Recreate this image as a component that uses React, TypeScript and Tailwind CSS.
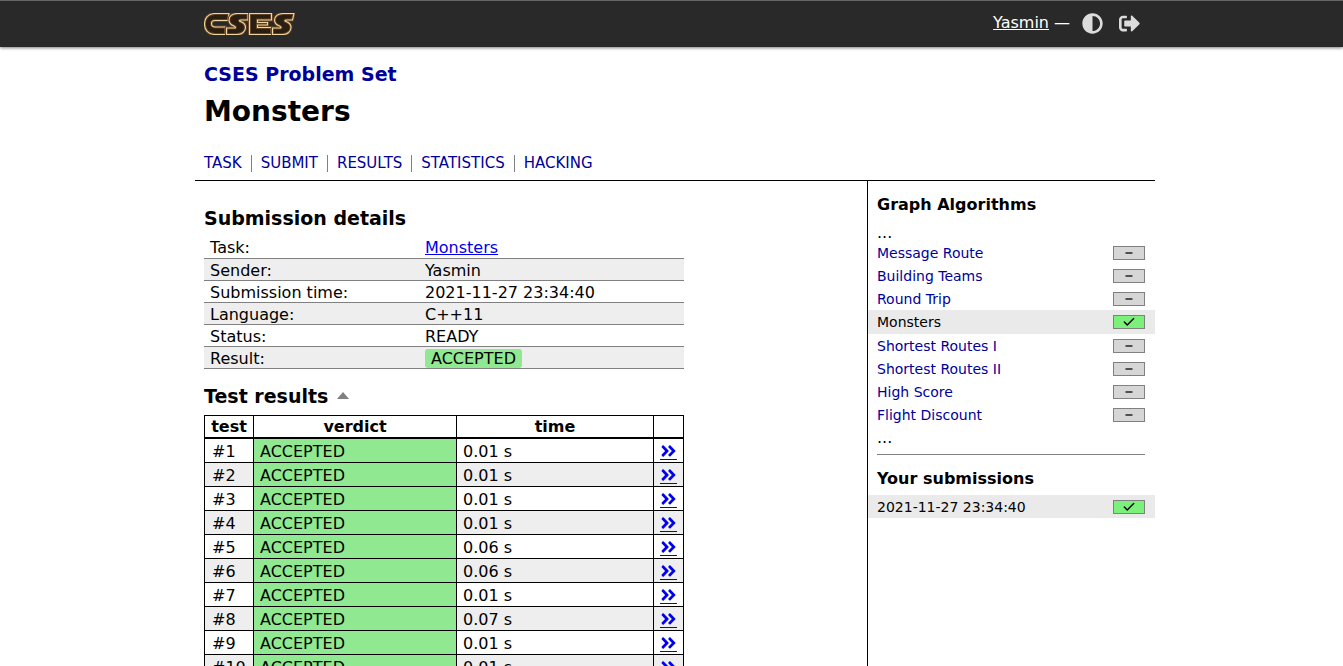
import { FaAdjust, FaSignOutAlt, FaAngleDoubleRight } from "react-icons/fa";
import { Check, Minus } from "lucide-react";

const navItems = ["TASK", "SUBMIT", "RESULTS", "STATISTICS", "HACKING"];

const tasks = [
  { name: "Message Route", solved: false },
  { name: "Building Teams", solved: false },
  { name: "Round Trip", solved: false },
  { name: "Monsters", solved: true },
  { name: "Shortest Routes I", solved: false },
  { name: "Shortest Routes II", solved: false },
  { name: "High Score", solved: false },
  { name: "Flight Discount", solved: false },
];

const times = ["0.01", "0.01", "0.01", "0.01", "0.06", "0.06", "0.01", "0.07", "0.01", "0.01"];

const logoShapes = [
  "M26 1.500H12C5 1.500 1.500 6.500 1.500 12S5 22.500 12 22.500H22.500V15H12C10 15 8.500 13.500 8.500 11.500S10 8.500 12 8.500H25Z",
  "M45 1.500H34C29 1.500 26 4.500 26 8C26 11 28 13 31 14C33 15 33 16 31 16H23.500V22.500H34C39 22.500 42.500 19.500 42.500 15.500C42.500 12.500 40.500 10.500 37.500 9.500C36 9 36 8 38 8H45Z",
  "M46.500 1.500H68.500V8H54.500V10.500H64.500V13H54.500V15.500H68.500V22.500H46.500Z",
  "M91 1.500H80C75 1.500 71.500 4.500 71.500 8C71.500 11 73.500 13 76.500 14C78.500 15 78.500 16 76.500 16H69.500V22.500H79.500C84.500 22.500 88 19.500 88 15.500C88 12.500 86 10.500 83 9.500C81.500 9 81.500 8 83.500 8H89.500Z",
];

function Logo() {
  return (
    <svg viewBox="1 1 91 22" className="block h-[22px] w-[91px]" aria-label="CSES" role="img">
      {logoShapes.map((d) => (
        <g key={d}>
          <path d={d} fill="#2a1d12" stroke="#5f4021" strokeWidth="3" />
          <path d={d} fill="none" stroke="#f0d5a0" strokeWidth="1.1" />
        </g>
      ))}
    </svg>
  );
}

function Score({ solved }: { solved: boolean }) {
  return (
    <span
      className={
        solved
          ? "flex h-[14px] w-8 items-center justify-center border border-[#808080] bg-[#7bf17b] text-black"
          : "flex h-[14px] w-8 items-center justify-center border border-[#808080] bg-[#d6d6d6] text-[#505050]"
      }
    >
      {solved ? <Check size={14} strokeWidth={2.5} aria-label="solved" /> : <Minus size={12} strokeWidth={4} strokeLinecap="butt" aria-label="not attempted" />}
    </span>
  );
}

export default function App() {
  const details = [
    ["Task:", <a href="#task" className="text-[#0000ee] underline">Monsters</a>],
    ["Sender:", "Yasmin"],
    ["Submission time:", "2021-11-27 23:34:40"],
    ["Language:", "C++11"],
    ["Status:", "READY"],
    ["Result:", <span className="block w-fit rounded-[3px] bg-[#90e890] px-[6px] leading-[19px]">ACCEPTED</span>],
  ];
  return (
    <div className="flex h-screen flex-col overflow-hidden bg-white font-[Verdana,'DejaVu_Sans',sans-serif] text-base text-black">
      <header className="z-10 shrink-0 border-t border-[#666] bg-[#292929] shadow-[0_1px_3px_rgba(0,0,0,0.5)]">
        <div className="mx-auto flex h-[46px] max-w-[967px] items-center justify-between pr-[15px] pl-4">
          <a href="#home"><Logo /></a>
          <div className="flex items-center pb-0.5 text-white">
            <a href="#user" className="underline">Yasmin</a>
            <span className="ml-[5px]">—</span>
            <button type="button" aria-label="Toggle theme" className="ml-3 text-[#dcdcdc]"><FaAdjust size={21} /></button>
            <a href="#logout" aria-label="Log out" className="ml-4 text-[#dcdcdc]"><FaSignOutAlt size={21} /></a>
          </div>
        </div>
      </header>
      <div className="mx-auto flex w-full max-w-[967px] grow flex-col pl-[7px]">
        <div className="border-b border-black px-[9px] pt-[15px] pb-2">
          <h2 className="text-[19px] leading-6 font-bold"><a href="#list" className="text-[#000099]">CSES Problem Set</a></h2>
          <h1 className="mt-2 text-[28px] leading-9 font-bold">Monsters</h1>
          <nav className="mt-[25px] flex text-[15px] leading-[17px] text-[#000099]">
            {navItems.map((n, i) => (
              <a key={n} href="#nav" className={i === 0 ? "pr-[9px]" : "border-l border-[#808080] px-[9px]"}>{n}</a>
            ))}
          </nav>
        </div>
        <div className="flex grow">
          <main className="grow px-[9px] pt-[25px]">
            <h3 className="text-[19px] leading-6 font-bold">Submission details</h3>
            <table className="mt-[6px] w-[480px] table-fixed border-collapse leading-[19px]">
              <tbody>
                {details.map(([label, value], i) => (
                  <tr key={i} className="h-[22px] border-b border-[#808080] even:bg-[#eee]">
                    <td className="w-[215px] px-0 pt-0.5 pb-0 pl-[6px]">{label}</td>
                    <td className="px-0 pt-0.5 pb-0 pl-[6px]">{value}</td>
                  </tr>
                ))}
              </tbody>
            </table>
            <h3 className="mt-[15px] flex items-center gap-[9px] text-[19px] leading-6 font-bold">
              Test results
              <svg viewBox="0 0 12 7" className="h-[7px] w-3"><path d="M0 7L6 0L12 7Z" fill="#808080" /></svg>
            </h3>
            <table className="mt-[7px] w-[480px] table-fixed border-collapse border border-black leading-[21px]">
              <thead>
                <tr className="border-b-2 border-black leading-5">
                  <th className="w-[49px] border-r border-black p-0 pt-px">test</th>
                  <th className="w-[203px] border-r border-black p-0 pt-px">verdict</th>
                  <th className="w-[197px] border-r border-black p-0 pt-px">time</th>
                  <th className="p-0" aria-label="details" />
                </tr>
              </thead>
              <tbody>
                {times.map((t, i) => (
                  <tr key={i} className="h-6 border-b border-black even:bg-[#eee]">
                    <td className="border-r border-black pt-0.5 pb-0 pl-[7px]">#{i + 1}</td>
                    <td className="border-r border-black bg-[#90e890] pt-0.5 pb-0 pl-[6px]">ACCEPTED</td>
                    <td className="border-r border-black pt-0.5 pb-0 pl-[6px]">{t} s</td>
                    <td className="px-0 pt-0.5 pb-0">
                      <a href="#test" aria-label="Show test" className="mx-auto flex h-[18px] w-[17px] items-center justify-center border-b border-[#0000ee] text-[#0000ee]"><FaAngleDoubleRight size={18} /></a>
                    </td>
                  </tr>
                ))}
              </tbody>
            </table>
          </main>
          <aside className="w-[288px] shrink-0 border-l border-black pt-[13px] text-sm">
            <h4 className="px-[9px] text-base leading-[22px] font-bold">Graph Algorithms</h4>
            <div className="mt-[9px] px-[9px] text-base leading-4">...</div>
            <ul>
              {tasks.map((t) => (
                <li key={t.name} className={t.solved ? "flex h-6 items-center justify-between bg-[#eaeaea] pr-[10px] pl-[9px]" : "flex h-[23px] items-center justify-between pr-[10px] pl-[9px]"}>
                  <a href="#problem" className={t.solved ? "text-black" : "text-[#000099]"}>{t.name}</a>
                  <Score solved={t.solved} />
                </li>
              ))}
            </ul>
            <div className="mt-px px-[9px] text-base leading-[22px]">...</div>
            <hr className="mt-[5px] mr-[10px] ml-[9px] border-[#808080]" />
            <h4 className="mt-[13px] px-[9px] text-base leading-[22px] font-bold">Your submissions</h4>
            <div className="mt-[5px] flex h-[23px] items-center justify-between bg-[#eaeaea] pr-[10px] pl-[9px]">
              <a href="#submission">2021-11-27 23:34:40</a>
              <Score solved />
            </div>
          </aside>
        </div>
      </div>
    </div>
  );
}
